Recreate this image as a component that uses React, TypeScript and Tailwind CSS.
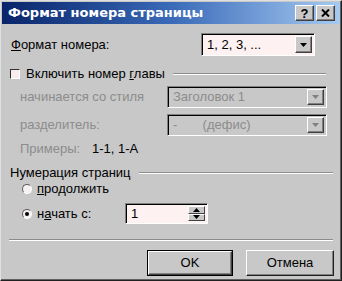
import React from "react";

const font = { fontFamily: '"Liberation Sans", Arial, sans-serif' };

function Arrow({ disabled }: { disabled?: boolean }) {
  return (
    <div className="w-[17px] h-full bg-[#c8c8c8] border border-t-white border-l-white border-b-[#404040] border-r-[#404040] shadow-[inset_-1px_-1px_0_#808080] flex items-center justify-center">
      <svg width="7" height="4" viewBox="0 0 7 4">
        <polygon points="0,0 7,0 3.5,4" fill={disabled ? "#808080" : "#000"} />
      </svg>
    </div>
  );
}

function Combo({ text, w, disabled }: { text: string; w: string; disabled?: boolean }) {
  return (
    <div
      className={`${w} h-full flex items-stretch border border-t-[#808080] border-l-[#808080] border-b-white border-r-white shadow-[inset_1px_1px_0_#000] p-[2px] pl-[3px] ${
        disabled ? "bg-[#c8c8c8] text-[#8c8c8c]" : "bg-[#fdf1f1] text-black"
      }`}
    >
      <div className="flex-1 flex items-center pl-[2px] whitespace-pre">{text}</div>
      <Arrow disabled={disabled} />
    </div>
  );
}

function Radio({ checked }: { checked?: boolean }) {
  return (
    <div className="w-[10px] h-[10px] rounded-full bg-[#f6f0f0] border border-t-[#606060] border-l-[#606060] border-b-white border-r-white flex items-center justify-center">
      {checked && <div className="w-[4px] h-[4px] rounded-full bg-black" />}
    </div>
  );
}

export default function App() {
  return (
    <div
      style={font}
      className="w-[342px] h-[281px] bg-[#c8c8c8] border border-t-[#e0e0e0] border-l-[#e0e0e0] border-b-[#202020] border-r-[#202020] shadow-[inset_-1px_-1px_0_#606060] text-[13px] text-black flex flex-col overflow-hidden"
    >
      {/* Title bar */}
      <div className="h-[22px] mx-[1px] mt-[1px] bg-gradient-to-r from-[#0a246a] via-[#3a6ab8] to-[#a6caf0] flex items-center pl-[6px] pr-[5px]">
        <span
          className="text-white font-bold text-[13px] flex-1"
          style={{ fontFamily: '"DejaVu Sans", Verdana, sans-serif' }}
        >
          Формат номера страницы
        </span>
        <div className="flex gap-[2px]">
          <div className="w-[19px] h-[16px] bg-[#c8c8c8] border border-t-white border-l-white border-b-[#404040] border-r-[#404040] shadow-[inset_-1px_-1px_0_#808080] flex items-center justify-center font-bold text-[13px] leading-none">?</div>
          <div className="w-[19px] h-[16px] bg-[#c8c8c8] border border-t-white border-l-white border-b-[#404040] border-r-[#404040] shadow-[inset_-1px_-1px_0_#808080] flex items-center justify-center">
            <svg width="9" height="8" viewBox="0 0 9 8">
              <path d="M1 0.5 L8 7.5 M8 0.5 L1 7.5" stroke="#000" strokeWidth="2" />
            </svg>
          </div>
        </div>
      </div>

      {/* Format row */}
      <div className="h-[23px] mt-[9px] flex items-center pl-[10px] pr-[26px]">
        <span className="flex-1"><u>Ф</u>ормат номера:</span>
        <Combo text="1, 2, 3, ..." w="w-[114px]" />
      </div>

      {/* Chapter group header */}
      <div className="mt-[12px] h-[12px] flex items-center pl-[9px] pr-[15px]">
        <div className="w-[10px] h-[10px] bg-[#f8eeee] border border-t-[#303030] border-l-[#303030] border-b-white border-r-white" />
        <span className="ml-[6px]">Включить номер <u>г</u>лавы</span>
        <div className="flex-1 ml-[8px] h-[2px] border-t border-t-[#8c8c8c] border-b border-b-white" />
      </div>

      <div className="h-[22px] mt-[6px] flex items-center pl-[19px] pr-[14px] text-[#8c8c8c]">
        <span className="flex-1">начинается со стиля</span>
        <Combo text="Заголовок 1" w="w-[160px]" disabled />
      </div>
      <div className="h-[22px] mt-[6px] flex items-center pl-[19px] pr-[14px] text-[#8c8c8c]">
        <span className="flex-1">разделитель:</span>
        <Combo text={"-       (дефис)"} w="w-[160px]" disabled />
      </div>

      <div className="h-[14px] mt-[6px] flex items-center pl-[19px]">
        <span className="w-[72px] text-[#8c8c8c]">Примеры:</span>
        <span>1-1, 1-A</span>
      </div>

      {/* Page numbering */}
      <div className="mt-[10px] h-[14px] flex items-center pl-[9px] pr-[8px]">
        <span>Нумерация страниц</span>
        <div className="flex-1 ml-[8px] h-[2px] border-t border-t-[#8c8c8c] border-b border-b-white" />
      </div>

      <div className="mt-[1px] h-[16px] flex items-center pl-[21px]">
        <Radio />
        <span className="ml-[5px]"><u>п</u>родолжить</span>
      </div>

      <div className="mt-[6px] h-[21px] flex items-center pl-[21px]">
        <Radio checked />
        <span className="ml-[5px] w-[88px]">н<u>а</u>чать с:</span>
        <div className="w-[83px] h-full flex items-stretch bg-[#fdf1f1] border border-t-[#808080] border-l-[#808080] border-b-white border-r-white shadow-[inset_1px_1px_0_#000] p-[2px] pl-[3px]">
          <div className="flex-1 flex items-center pl-[2px]">1</div>
          <div className="w-[17px] flex flex-col">
            <div className="flex-1 bg-[#c8c8c8] border border-t-white border-l-white border-b-[#404040] border-r-[#404040] flex items-center justify-center">
              <svg width="7" height="4" viewBox="0 0 7 4"><polygon points="0,4 7,4 3.5,0" fill="#000" /></svg>
            </div>
            <div className="flex-1 bg-[#c8c8c8] border border-t-white border-l-white border-b-[#404040] border-r-[#404040] flex items-center justify-center">
              <svg width="7" height="4" viewBox="0 0 7 4"><polygon points="0,0 7,0 3.5,4" fill="#000" /></svg>
            </div>
          </div>
        </div>
      </div>

      <div className="mt-[15px] mx-[8px] h-[2px] border-t border-t-[#8c8c8c] border-b border-b-white" />

      <div className="mt-[9px] flex justify-end gap-[13px] pr-[7px]">
        <div className="w-[86px] h-[26px] border border-black flex">
          <div className="flex-1 bg-[#c8c8c8] border border-t-white border-l-white border-b-[#404040] border-r-[#404040] shadow-[inset_-1px_-1px_0_#808080] flex items-center justify-center">OK</div>
        </div>
        <div className="w-[88px] h-[26px] bg-[#c8c8c8] border border-t-white border-l-white border-b-[#202020] border-r-[#202020] shadow-[inset_-1px_-1px_0_#808080] flex items-center justify-center">Отмена</div>
      </div>
    </div>
  );
}
